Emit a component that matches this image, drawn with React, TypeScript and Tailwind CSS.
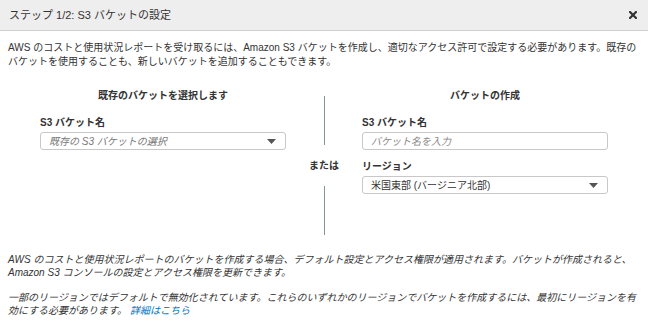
import React from "react";

const font = {
  fontFamily: '"Liberation Sans", "Noto Sans CJK JP", sans-serif',
};

function Caret() {
  return (
    <svg width="9" height="5" viewBox="0 0 9 5" className="flex-none">
      <path d="M0 0 H9 L4.5 5 Z" fill="#555" />
    </svg>
  );
}

function CloseIcon() {
  return (
    <svg width="8" height="8" viewBox="0 0 8 8">
      <path d="M1 1 L7 7 M7 1 L1 7" stroke="#333" strokeWidth="2.2" strokeLinecap="square" />
    </svg>
  );
}

interface SelectBoxProps {
  text: string;
  placeholder?: boolean;
}

function SelectBox({ text, placeholder }: SelectBoxProps) {
  return (
    <div className="flex h-[18px] items-center justify-between rounded-[3px] border border-[#c8c8c8] bg-white pl-[8px] pr-[9px]">
      <span className={placeholder ? "italic text-[#777]" : "text-[#333]"}>{text}</span>
      <Caret />
    </div>
  );
}

function Label({ children }: { children: React.ReactNode }) {
  return <div className="mb-[2px] font-bold leading-[14px] text-[#333]">{children}</div>;
}

export default function App() {
  return (
    <div className="h-[324px] w-[648px] overflow-hidden bg-white text-[10px] text-[#333]" style={font}>
      <header className="flex h-[31px] items-center justify-between border-b border-[#cfcfcf] bg-[#eeeeee] pl-[9px] pr-[11px]">
        <h1 className="text-[11px] text-[#333]">ステップ 1/2: S3 バケットの設定</h1>
        <CloseIcon />
      </header>

      <p className="px-[8px] pt-[10px] leading-[14px]">
        AWS のコストと使用状況レポートを受け取るには、Amazon S3 バケットを作成し、適切なアクセス許可で設定する必要があります。既存のバケットを使用することも、新しいバケットを追加することもできます。
      </p>

      <section className="mt-[20px] flex px-[40px]">
        <div className="w-[246px]">
          <h2 className="mb-[13px] text-center font-bold leading-[14px]">既存のバケットを選択します</h2>
          <Label>S3 バケット名</Label>
          <SelectBox text="既存の S3 バケットの選択" placeholder />
        </div>

        <div className="flex flex-1 flex-col items-center pt-[7px]">
          <div className="h-[49px] w-px bg-[#879596]" />
          <div className="flex h-[41px] items-center font-bold">または</div>
          <div className="h-[49px] w-px bg-[#879596]" />
        </div>

        <div className="w-[246px]">
          <h2 className="mb-[13px] text-center font-bold leading-[14px]">バケットの作成</h2>
          <Label>S3 バケット名</Label>
          <div className="flex h-[18px] items-center rounded-[3px] border border-[#c8c8c8] bg-white pl-[8px] italic text-[#888]">
            バケット名を入力
          </div>
          <div className="mt-[10px]">
            <Label>リージョン</Label>
            <SelectBox text="米国東部 (バージニア北部)" />
          </div>
        </div>
      </section>

      <div className="mt-[18px] px-[8px] italic leading-[13px]">
        <p>
          AWS のコストと使用状況レポートのバケットを作成する場合、デフォルト設定とアクセス権限が適用されます。バケットが作成されると、Amazon S3 コンソールの設定とアクセス権限を更新できます。
        </p>
        <p className="mt-[12px]">
          一部のリージョンではデフォルトで無効化されています。これらのいずれかのリージョンでバケットを作成するには、最初にリージョンを有効にする必要があります。{" "}
          <a className="text-[#0073bb]">詳細はこちら</a>
        </p>
      </div>
    </div>
  );
}
